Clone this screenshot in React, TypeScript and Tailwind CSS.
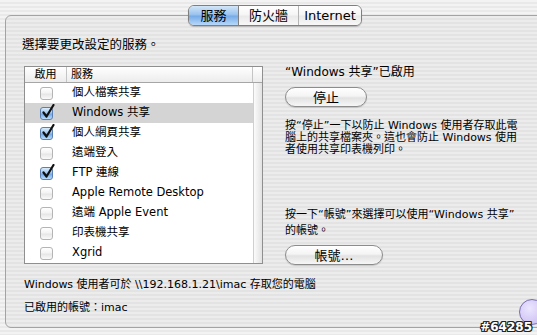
import React from "react";

const rows = [
  { checked: false, label: "個人檔案共享" },
  { checked: true, label: "Windows 共享", selected: true },
  { checked: true, label: "個人網頁共享" },
  { checked: false, label: "遠端登入" },
  { checked: true, label: "FTP 連線" },
  { checked: false, label: "Apple Remote Desktop" },
  { checked: false, label: "遠端 Apple Event" },
  { checked: false, label: "印表機共享" },
  { checked: false, label: "Xgrid" },
];

function Check({ checked }: { checked: boolean }) {
  return (
    <div className="relative w-[13px] h-[13px]">
      {checked ? (
        <div className="w-full h-full rounded-[3px] border border-[#5b7fae] bg-[linear-gradient(180deg,#dcecfb_0%,#9ec8f2_45%,#6fa9e8_55%,#bcdcfb_100%)]" />
      ) : (
        <div className="w-full h-full rounded-[3px] border border-[#b4b4b4] bg-[linear-gradient(180deg,#ffffff_0%,#f3f3f3_45%,#e6e6e6_55%,#fafafa_100%)]" />
      )}
      {checked && (
        <svg className="absolute left-[1px] top-[-3px]" width="14" height="15" viewBox="0 0 14 15">
          <path d="M2.5 8.5 L5.5 12.5 L12.5 1" fill="none" stroke="#111" strokeWidth="2.2" strokeLinecap="round" strokeLinejoin="round" />
        </svg>
      )}
    </div>
  );
}

function PillButton({ label, w }: { label: string; w: string }) {
  return (
    <div
      className={`${w} h-[20px] rounded-full border border-[#8c8c8c] bg-[linear-gradient(180deg,#ffffff_0%,#f4f4f4_45%,#e2e2e2_55%,#f6f6f6_100%)] flex items-center justify-center text-[13px] leading-none text-black shadow-[0_1px_1px_rgba(0,0,0,0.15)]`}
    >
      {label}
    </div>
  );
}

export default function App() {
  return (
    <div className="relative w-[537px] h-[335px] overflow-hidden [background:repeating-linear-gradient(180deg,#f3f3f3_0px,#f3f3f3_2px,#e9e9e9_2px,#e9e9e9_4px)] [font-family:'DejaVu_Sans','Noto_Sans_CJK_TC',sans-serif] text-black pl-[5px] pt-[15px]">
      <div className="relative w-[545px] h-[313px] rounded-[6px] border border-[#a3a3a3] [background:repeating-linear-gradient(180deg,#ececec_0px,#ececec_2px,#e3e3e3_2px,#e3e3e3_4px)] pl-[16px] pt-[21px]">
        {/* Tabs */}
        <div className="absolute left-[182px] top-[-11px] flex h-[21px] rounded-[6px] border border-[#7f7f7f] overflow-hidden shadow-[0_1px_1px_rgba(0,0,0,0.2)] text-[13px] leading-none">
          <div className="w-[50px] flex items-center justify-center bg-[linear-gradient(180deg,#d4e6f8_0%,#95c1ee_48%,#75aae6_52%,#b6d8fa_100%)] border-r border-[#7f7f7f]">
            服務
          </div>
          <div className="w-[60px] flex items-center justify-center bg-[linear-gradient(180deg,#ffffff_0%,#f5f5f5_48%,#e9e9e9_52%,#f8f8f8_100%)] border-r border-[#b5b5b5]">
            防火牆
          </div>
          <div className="w-[62px] flex items-center justify-center bg-[linear-gradient(180deg,#ffffff_0%,#f5f5f5_48%,#e9e9e9_52%,#f8f8f8_100%)]">
            Internet
          </div>
        </div>

        <div className="text-[12.5px] leading-[16px]">選擇要更改設定的服務。</div>

        <div className="flex mt-[13px] ml-[2px]">
          {/* Table */}
          <div className="w-[239px] h-[198px] border border-[#8f8f8f] bg-white flex flex-col">
            <div className="h-[16px] flex border-b border-[#a6a6a6] bg-[linear-gradient(180deg,#ffffff,#ececec)] text-[11px] leading-none">
              <div className="w-[42px] flex items-center justify-center border-r border-[#c4c4c4]">啟用</div>
              <div className="flex-1 flex items-center pl-[4px] border-r border-[#c4c4c4]">服務</div>
              <div className="w-[9px]" />
            </div>
            <div className="flex-1 flex">
              <div className="flex-1 flex flex-col">
                {rows.map((r, i) => (
                  <div
                    key={i}
                    className={`h-[20px] flex items-center ${r.selected ? "bg-[#d4d4d4]" : ""}`}
                  >
                    <div className="w-[42px] flex justify-center">
                      <Check checked={r.checked} />
                    </div>
                    <div className="pl-[5px] text-[11.5px] leading-none whitespace-nowrap">{r.label}</div>
                  </div>
                ))}
              </div>
              <div className="w-[9px] border-l border-[#d0d0d0] bg-[linear-gradient(90deg,#fbfbfb,#e2e2e2)]" />
            </div>
          </div>

          {/* Right column */}
          <div className="ml-[22px] w-[235px] h-[199px] flex flex-col justify-between">
            <div className="flex flex-col">
              <div className="text-[12px] leading-[12px] whitespace-nowrap">“Windows 共享”已啟用</div>
              <div className="mt-[9px]">
                <PillButton label="停止" w="w-[82px]" />
              </div>
              <div className="mt-[13px] text-[11px] leading-[12px] whitespace-nowrap">
                按“停止”一下以防止 Windows 使用者存取此電
                <br />
                腦上的共享檔案夾。這也會防止 Windows 使用
                <br />
                者使用共享印表機列印。
              </div>
            </div>
            <div className="flex flex-col">
              <div className="text-[11px] leading-[16px] whitespace-nowrap">
                按一下“帳號”來選擇可以使用“Windows 共享”
                <br />
                的帳號。
              </div>
              <div className="mt-[6px]">
                <PillButton label="帳號…" w="w-[98px]" />
              </div>
            </div>
          </div>
        </div>

        <div className="mt-[13px] ml-[2px] text-[11px] leading-[14px] whitespace-nowrap">
          Windows 使用者可於 \\192.168.1.21\imac 存取您的電腦
        </div>
        <div className="mt-[9px] ml-[2px] text-[11px] leading-[14px] whitespace-nowrap">已啟用的帳號：imac</div>
      </div>

      {/* purple circle partially visible */}
      <div className="absolute left-[519px] top-[299px] w-[26px] h-[26px] rounded-full border border-[#7a6cb0] bg-[radial-gradient(circle_at_40%_35%,#ece6ff,#c4b6ee)]" />
      {/* watermark */}
      <div className="absolute right-[5px] bottom-[2px] text-[12px] leading-none font-bold text-white [font-family:'DejaVu_Sans',sans-serif] [text-shadow:1px_0_0_#222,-1px_0_0_#222,0_1px_0_#222,0_-1px_0_#222,1px_1px_0_#222,-1px_-1px_0_#222,1px_-1px_0_#222,-1px_1px_0_#222]">
        #64285
      </div>
    </div>
  );
}
